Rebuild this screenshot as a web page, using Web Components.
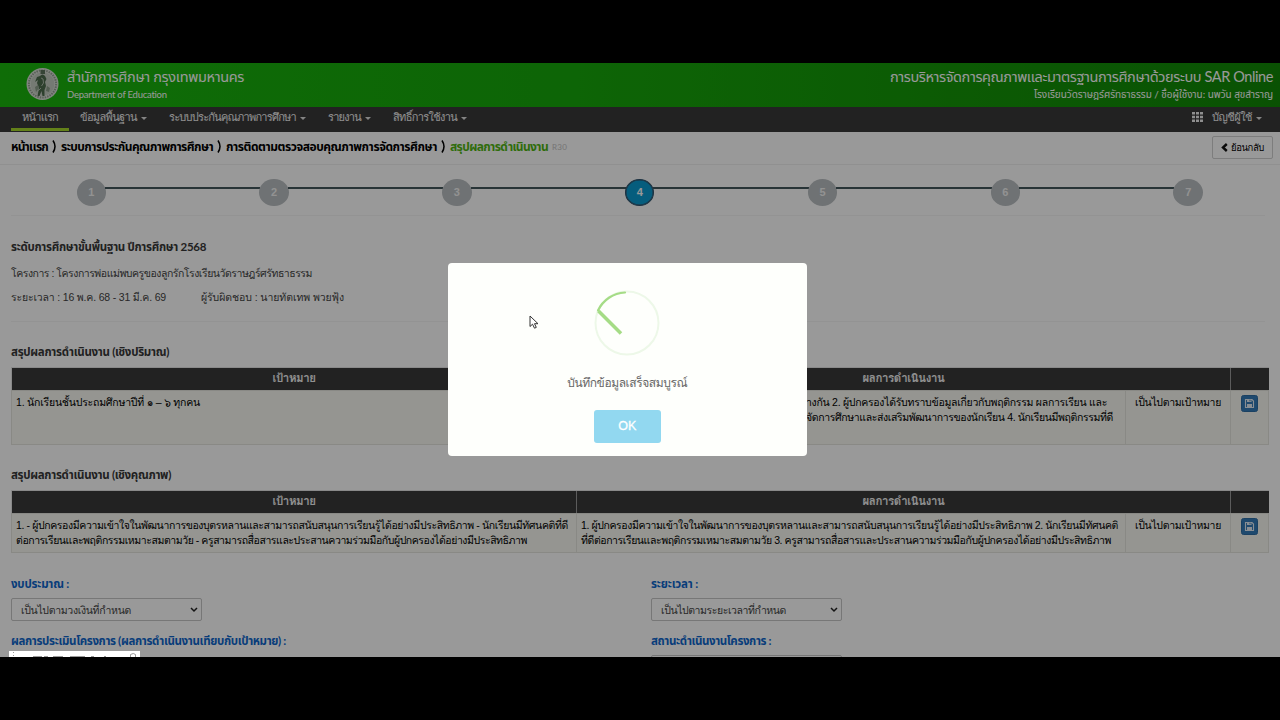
<!DOCTYPE html>
<html lang="th">
<head>
<meta charset="utf-8">
<title>SAR Online</title>
<style>
    body {
        --display: Lato, "Noto Sans Thai", "Noto Sans", sans-serif;
        margin: 0;
        background: #000;
        overflow: hidden;
        font-family: "Liberation Sans", Loma, "Noto Sans Thai Looped", "Noto Sans Thai", "Noto Sans", sans-serif;
    }
</style>
</head>
<body>
<sar-app></sar-app>

<script>
    // one line of text, tracked in or out so that it takes the given width
    class FitText extends HTMLElement {
        constructor() {
            super();
            this.attachShadow({mode: 'open'});
            this.shadowRoot.innerHTML = /*html*/ `
                <style>
                    :host { display: inline-block; white-space: nowrap; vertical-align: top; }
                </style>
                <slot></slot>
            `;
        }

        connectedCallback() {
            const width = Number(this.getAttribute('width'));
            if (!width) return;
            const segmenter = new Intl.Segmenter('th', {granularity: 'grapheme'});
            const count = [...segmenter.segment(this.textContent)].length;
            this.style.letterSpacing = '0px';
            const natural = this.getBoundingClientRect().width;
            this.style.letterSpacing = ((width - natural) / count).toFixed(3) + 'px';
        }
    }

    class TopBanner extends HTMLElement {
        constructor() {
            super();
            this.attachShadow({mode: 'open'});
            this.shadowRoot.innerHTML = /*html*/ `
                <style>
                    :host {
                        display: flex;
                        justify-content: space-between;
                        height: 44px;
                        box-sizing: border-box;
                        padding: 4px 7px 0 26px;
                        color: #fff;
                        background: linear-gradient(90deg, #19b60d 0%, #17a80a 45%, #118806 100%);
                        font-family: var(--display);
                    }
                    .brand { display: flex; gap: 8px; }
                    svg { width: 33px; height: 34px; }
                    .name { font-size: 14.5px; line-height: 20px; }
                    .sub { font-size: 9.5px; line-height: 15px; }
                    .right { text-align: right; }
                    .right .sub { font-size: 10px; }
                </style>
                <div class="brand">
                    <svg viewBox="0 0 33 34">
                        <circle cx="16.500" cy="17" r="16" fill="#d9ded6"/>
                        <circle cx="16.500" cy="17" r="13.600" fill="none" stroke="#94a192" stroke-width="2" stroke-dasharray="1.500 1"/>
                        <circle cx="16.500" cy="17" r="11.800" fill="#c3ccc0"/>
                        <path d="M14 9q2.500-3 5 0l1.500 3-1.500 3 1 4-1.500 4v6h-2l-1-5-2 5h-2l1.500-8-2-5 1-3-3 2 2-5z" fill="#4c6b4c"/>
                        <path d="M9 20l3-2 1 3-3 4zM21 19l3 2-1 4-3-1z" fill="#8b9d89"/>
                        <path d="M14.500 3h4.500v4h-4.500z" fill="#5b735a"/>
                        <path d="M15 11l2 1 .5 4-2 3M12 24l3-3" fill="none" stroke="#aebcab"/>
                    </svg>
                    <div>
                        <div class="name"><fit-text width="177">สำนักการศึกษา กรุงเทพมหานคร</fit-text></div>
                        <div class="sub"><fit-text width="100">Department of Education</fit-text></div>
                    </div>
                </div>
                <div class="right">
                    <div class="name"><fit-text width="383">การบริหารจัดการคุณภาพและมาตรฐานการศึกษาด้วยระบบ SAR Online</fit-text></div>
                    <div class="sub"><fit-text width="239">โรงเรียนวัดราษฎร์ศรัทธาธรรม / ชื่อผู้ใช้งาน: นพวัน สุขสำราญ</fit-text></div>
                </div>
            `;
        }
    }

    class NavItem extends HTMLElement {
        constructor() {
            super();
            this.attachShadow({mode: 'open'});
            this.shadowRoot.innerHTML = /*html*/ `
                <style>
                    :host {
                        display: flex;
                        align-items: center;
                        box-sizing: border-box;
                        height: 24px;
                        padding: 0 11px 4px;
                        font-size: 11px;
                        line-height: 20px;
                        color: #f0f0f0;
                    }
                    :host([active]) { border-bottom: 3px solid #a6d82a; padding-bottom: 1px; }
                    i { display: none; border: 3px solid transparent; border-top-color: #ddd; border-bottom: 0; margin: 2px 0 0 4px; }
                    :host([caret]) i { display: block; }
                </style>
                <slot></slot><i></i>
            `;
        }
    }

    class MainNav extends HTMLElement {
        constructor() {
            super();
            this.attachShadow({mode: 'open'});
            this.shadowRoot.innerHTML = /*html*/ `
                <style>
                    :host {
                        display: flex;
                        height: 25px;
                        box-sizing: border-box;
                        padding: 0 7px 0 11px;
                        background: #3a3a3a;
                    }
                    .space { flex: 1; }
                    svg { width: 11px; height: 10px; margin: 5px -2px 0 0; }
                </style>
                <nav-item active><fit-text width="36">หน้าแรก</fit-text></nav-item>
                <nav-item caret><fit-text width="57">ข้อมูลพื้นฐาน</fit-text></nav-item>
                <nav-item caret><fit-text width="127">ระบบประกันคุณภาพการศึกษา</fit-text></nav-item>
                <nav-item caret><fit-text width="33">รายงาน</fit-text></nav-item>
                <nav-item caret><fit-text width="64">สิทธิ์การใช้งาน</fit-text></nav-item>
                <div class="space"></div>
                <svg viewBox="0 0 11 10" fill="#eee">
                    <path d="M0 0h3v2.600H0zM4 0h3v2.600H4zM8 0h3v2.600H8zM0 3.700h3v2.600H0zM4 3.700h3v2.600H4zM8 3.700h3v2.600H8zM0 7.400h3V10H0zM4 7.400h3V10H4zM8 7.400h3V10H8z"/>
                </svg>
                <nav-item caret><fit-text width="40">บัญชีผู้ใช้</fit-text></nav-item>
            `;
        }
    }

    class BreadCrumb extends HTMLElement {
        constructor() {
            super();
            this.attachShadow({mode: 'open'});
            this.shadowRoot.innerHTML = /*html*/ `
                <style>
                    :host {
                        display: flex;
                        align-items: flex-start;
                        justify-content: space-between;
                        height: 33px;
                        box-sizing: border-box;
                        padding: 4px 7px 0 11px;
                        border-bottom: 1px solid #f0f0f0;
                        font-size: 12px;
                        color: #000;
                    }
                    .trail { display: flex; line-height: 22px; font-weight: bold; font-family: var(--display); }
                    .trail svg { width: 5px; height: 13px; margin: 4px 4px 0 4px; }
                    .here { color: #4fb512; }
                    .code { font-size: 8px; color: #c4c4c4; margin-left: 4px; font-weight: normal; line-height: 23px; }
                    .back {
                        display: flex;
                        align-items: center;
                        justify-content: center;
                        gap: 3px;
                        width: 61px;
                        height: 23px;
                        box-sizing: border-box;
                        border: 1px solid #d0d0d0;
                        border-radius: 2px;
                        font-size: 9.5px;
                        line-height: 18px;
                    }
                    .back svg { width: 7px; height: 9px; margin-top: -1px; }
                </style>
                <div class="trail">
                    <fit-text width="37">หน้าแรก</fit-text>
                    <svg viewBox="0 0 5 13"><path d="M1 .5q4 6 0 12" fill="none" stroke="#000" stroke-width="1.500"/></svg>
                    <fit-text width="152">ระบบการประกันคุณภาพการศึกษา</fit-text>
                    <svg viewBox="0 0 5 13"><path d="M1 .5q4 6 0 12" fill="none" stroke="#000" stroke-width="1.500"/></svg>
                    <fit-text width="211">การติดตามตรวจสอบคุณภาพการจัดการศึกษา</fit-text>
                    <svg viewBox="0 0 5 13"><path d="M1 .5q4 6 0 12" fill="none" stroke="#000" stroke-width="1.500"/></svg>
                    <fit-text class="here" width="98">สรุปผลการดำเนินงาน</fit-text>
                    <fit-text class="code" width="15">R30</fit-text>
                </div>
                <div class="back">
                    <svg viewBox="0 0 7 9"><path d="M5.800 1L2 4.500 5.800 8" fill="none" stroke="#111" stroke-width="2.400"/></svg>
                    <fit-text width="33">ย้อนกลับ</fit-text>
                </div>
            `;
        }
    }

    class StepBar extends HTMLElement {
        constructor() {
            super();
            this.attachShadow({mode: 'open'});
            const current = Number(this.getAttribute('current'));
            let steps = '';
            for (let i = 1; i <= 7; i++) {
                steps += (i > 1 ? '<hr>' : '') + `<span class="${i === current ? 'on' : ''}">${i}</span>`;
            }
            this.shadowRoot.innerHTML = /*html*/ `
                <style>
                    :host {
                        display: flex;
                        height: 51px;
                        box-sizing: border-box;
                        margin: 0 15px 0 11px;
                        padding: 14px 62px 0 65.5px;
                        border-bottom: 1px solid #f5f5f5;
                    }
                    span {
                        width: 29.5px;
                        height: 27px;
                        box-sizing: border-box;
                        border-radius: 50%;
                        background: #b9bec1;
                        color: #f4f4f4;
                        font: bold 11px/27px "Liberation Sans", sans-serif;
                        text-align: center;
                    }
                    .on { background: #0b9bd0; border: 1px solid #34526a; box-shadow: inset 0 0 0 .5px #34526a; line-height: 25px; color: #fff; }
                    hr { flex: 1; height: 2px; margin: 8px -1px 0; border: 0; background: #44575d; }
                </style>
                ${steps}
            `;
        }
    }

    class ResultTable extends HTMLElement {
        constructor() {
            super();
            this.attachShadow({mode: 'open'});
            this.shadowRoot.innerHTML = /*html*/ `
                <style>
                    :host { display: block; margin: 0 11px; color: #000; font-size: 10.500px; }
                    .row { display: grid; grid-template-columns: 564px 549px 105px 1fr; }
                    .head {
                        height: 23px;
                        background: #3a3a3a;
                        color: #f2f2f2;
                        font-size: 11.500px;
                        line-height: 20px;
                        font-weight: bold;
                        text-align: center;
                        border: 1px solid #e4e4e4;
                        border-width: 1px 0 0 1px;
                        box-sizing: border-box;
                    }
                    .head .wide { grid-column: span 2; }
                    .head div + div { border-left: 1.500px solid #999; }
                    .body {
                        height: var(--row-height, 54px);
                        box-sizing: border-box;
                        background: #f8f8f2;
                        border: 1px solid #e4e4de;
                        line-height: 14.500px;
                    }
                    .body > div { padding: 4px 0 0 4px; }
                    .body > div + div { border-left: 1px solid #e4e4de; }
                    .body .state { padding: 4px 0 0; text-align: center; }
                    .body .act { display: flex; justify-content: center; padding: 4px 0 0; }
                    .act svg { width: 17px; height: 17px; }
                </style>
                <div class="row head">
                    <div><fit-text width="43">เป้าหมาย</fit-text></div>
                    <div class="wide"><fit-text width="82">ผลการดำเนินงาน</fit-text></div>
                    <div></div>
                </div>
                <div class="row body">
                    <div><slot name="goal"></slot></div>
                    <div><slot name="result"></slot></div>
                    <div class="state"><fit-text width="86">เป็นไปตามเป้าหมาย</fit-text></div>
                    <div class="act">
                        <svg viewBox="0 0 17 17">
                            <rect x=".5" y=".5" width="16" height="16" rx="2" fill="#337ab7" stroke="#2e6da4"/>
                            <path d="M4.500 4.500h6.500l1.500 1.500v6.500h-8z" fill="none" stroke="#e4edf5" stroke-width="1.100"/>
                            <path d="M6 4h4.500v3H6zM6 9h5v3.500H6z" fill="#e4edf5"/>
                            <path d="M8.500 4.800h1v1.500h-1z" fill="#337ab7"/>
                        </svg>
                    </div>
                </div>
            `;
        }
    }

    class SelectBox extends HTMLElement {
        constructor() {
            super();
            this.attachShadow({mode: 'open'});
            this.shadowRoot.innerHTML = /*html*/ `
                <style>
                    :host {
                        display: flex;
                        justify-content: space-between;
                        align-items: center;
                        width: 191px;
                        height: 23px;
                        box-sizing: border-box;
                        padding: 0 3px 0 9px;
                        border: 1px solid #c6c6c6;
                        border-radius: 2px;
                        font-size: 10.500px;
                        line-height: 20px;
                        color: #444;
                    }
                    svg { width: 8px; height: 6px; }
                </style>
                <slot></slot>
                <svg viewBox="0 0 8 6"><path d="M1 1l3 3 3-3" fill="none" stroke="#222" stroke-width="1.500"/></svg>
            `;
        }
    }

    class AlertBox extends HTMLElement {
        constructor() {
            super();
            this.attachShadow({mode: 'open'});
            this.shadowRoot.innerHTML = /*html*/ `
                <style>
                    :host {
                        position: absolute;
                        left: 448px;
                        top: 200px;
                        width: 358.500px;
                        height: 193px;
                        display: flex;
                        flex-direction: column;
                        align-items: center;
                        background: #fefffc;
                        border-radius: 4px;
                    }
                    svg { flex: none; width: 66px; height: 66px; margin: 27px 0 0 -1px; }
                    .text { margin-top: 17px; font-size: 12px; line-height: 20px; color: #666; }
                    button {
                        width: 67px;
                        height: 33px;
                        margin: 17px 0 0 0;
                        padding: 0;
                        border: 0;
                        border-radius: 3px;
                        background: #92d8f0;
                        color: #fff;
                        font: 12.500px/33px "Liberation Sans", sans-serif;
                        -webkit-text-stroke: .3px #fff;
                    }
                </style>
                <svg viewBox="0 0 66 66" fill="none" stroke-linecap="round">
                    <circle cx="33" cy="33" r="31.500" stroke="#edf8e8" stroke-width="2"/>
                    <path d="M4 20.500A31.500 31.500 0 0 1 31 2.500" stroke="#a5dc86" stroke-width="2.200"/>
                    <path d="M4.500 21L27 43.500" stroke="#a5dc86" stroke-width="3.600" stroke-linecap="butt"/>
                </svg>
                <div class="text"><slot></slot></div>
                <button>OK</button>
            `;
        }
    }

    class SarApp extends HTMLElement {
        constructor() {
            super();
            this.attachShadow({mode: 'open'});
            this.shadowRoot.innerHTML = /*html*/ `
                <style>
                    :host {
                        display: block;
                        position: relative;
                        height: 594px;
                        margin: 63px 0;
                        overflow: hidden;
                        background: #fff;
                        color: #444;
                    }
                    h4 { margin: 0 11px; font-family: var(--display); font-size: 11.500px; line-height: 18px; height: 18px; color: #383838; }
                    p { display: flex; gap: 35px; font-size: 10.500px; line-height: 18px; }
                    .project { padding-top: 22px; height: 106px; box-sizing: border-box; margin: 0 15px 0 11px; border-bottom: 1px solid #f5f5f5; }
                    .project h4 { margin: 0; }
                    .project p { margin: 8px 0 0; }
                    .project p + p { margin-top: 6px; }
                    .first { margin-top: 21px; }
                    .second { margin-top: 21px; }
                    h4 + result-table { margin-top: 6px; }
                    .form {
                        display: grid;
                        grid-template-columns: 640px 1fr;
                        row-gap: 11px;
                        padding: 22px 0 0 11px;
                    }
                    .form label { display: block; height: 18px; margin-bottom: 5px; font-family: var(--display); font-size: 11.500px; line-height: 17px; font-weight: bold; color: #0e66cc; }
                    .shade { position: absolute; inset: 0; background: rgba(0, 0, 0, .4); }
                    .status { position: absolute; left: 9px; bottom: 0; width: 131px; height: 6px; background: #fff; }
                    .status svg, .cursor { display: block; }
                    .cursor { position: absolute; left: 529px; top: 252px; width: 10px; height: 15px; }
                </style>
                <top-banner></top-banner>
                <main-nav></main-nav>
                <bread-crumb></bread-crumb>
                <step-bar current="4"></step-bar>

                <div class="project">
                    <h4><fit-text width="195">ระดับการศึกษาขั้นพื้นฐาน ปีการศึกษา 2568</fit-text></h4>
                    <p><fit-text width="301">โครงการ : โครงการพ่อแม่พบครูของลูกรักโรงเรียนวัดราษฎร์ศรัทธาธรรม</fit-text></p>
                    <p>
                        <fit-text width="155">ระยะเวลา : 16 พ.ค. 68 - 31 มี.ค. 69</fit-text>
                        <fit-text width="143">ผู้รับผิดชอบ : นายทัตเทพ พวยฟุ้ง</fit-text>
                    </p>
                </div>

                <h4 class="first"><fit-text width="158">สรุปผลการดำเนินงาน (เชิงปริมาณ)</fit-text></h4>
                <result-table style="--row-height: 55px">
                    <fit-text slot="goal" width="184">1. นักเรียนชั้นประถมศึกษาปีที่ ๑ – ๖ ทุกคน</fit-text>
                    <div slot="result" style="padding-left: 225px">
                        <fit-text width="301">างกัน 2. ผู้ปกครองได้รับทราบข้อมูลเกี่ยวกับพฤติกรรม ผลการเรียน และ</fit-text>
                        <fit-text width="307">จัดการศึกษาและส่งเสริมพัฒนาการของนักเรียน 4. นักเรียนมีพฤติกรรมที่ดี</fit-text>
                    </div>
                </result-table>

                <h4 class="second"><fit-text width="160">สรุปผลการดำเนินงาน (เชิงคุณภาพ)</fit-text></h4>
                <result-table style="--row-height: 40px">
                    <div slot="goal">
                        <fit-text width="552">1. - ผู้ปกครองมีความเข้าใจในพัฒนาการของบุตรหลานและสามารถสนับสนุนการเรียนรู้ได้อย่างมีประสิทธิภาพ - นักเรียนมีทัศนคติที่ดี</fit-text>
                        <fit-text width="511">ต่อการเรียนและพฤติกรรมเหมาะสมตามวัย - ครูสามารถสื่อสารและประสานความร่วมมือกับผู้ปกครองได้อย่างมีประสิทธิภาพ</fit-text>
                    </div>
                    <div slot="result">
                        <fit-text width="537">1. ผู้ปกครองมีความเข้าใจในพัฒนาการของบุตรหลานและสามารถสนับสนุนการเรียนรู้ได้อย่างมีประสิทธิภาพ 2. นักเรียนมีทัศนคติ</fit-text>
                        <fit-text width="530">ที่ดีต่อการเรียนและพฤติกรรมเหมาะสมตามวัย 3. ครูสามารถสื่อสารและประสานความร่วมมือกับผู้ปกครองได้อย่างมีประสิทธิภาพ</fit-text>
                    </div>
                </result-table>

                <div class="form">
                    <div>
                        <label><fit-text width="58">งบประมาณ :</fit-text></label>
                        <select-box><fit-text width="110">เป็นไปตามวงเงินที่กำหนด</fit-text></select-box>
                    </div>
                    <div>
                        <label><fit-text width="47">ระยะเวลา :</fit-text></label>
                        <select-box><fit-text width="125">เป็นไปตามระยะเวลาที่กำหนด</fit-text></select-box>
                    </div>
                    <div>
                        <label><fit-text width="275">ผลการประเมินโครงการ (ผลการดำเนินงานเทียบกับเป้าหมาย) :</fit-text></label>
                    </div>
                    <div>
                        <label><fit-text width="120">สถานะดำเนินงานโครงการ :</fit-text></label>
                        <select-box></select-box>
                    </div>
                </div>

                <div class="shade"></div>
                <div class="status">
                    <svg width="131" height="6" fill="none" stroke="#999">
                        <path d="M4.500 1v1M4.500 4v1M24 5.500h9M35 5.500h4M44 5.500h10M61 5.500h15M82 5.500h3M95 5.500h2M121.500 6V3.500q3-2 5 0V6"/>
                    </svg>
                </div>
                <alert-box><fit-text width="120">บันทึกข้อมูลเสร็จสมบูรณ์</fit-text></alert-box>
                <svg class="cursor" viewBox="0 0 10 15"><path d="M1 1v10.500l2.500-2.300 2 4 1.800-.8-1.800-3.700H9z" fill="#fff" stroke="#333"/></svg>
            `;
        }
    }

    window.customElements.define('fit-text', FitText);
    window.customElements.define('nav-item', NavItem);
    window.customElements.define('top-banner', TopBanner);
    window.customElements.define('main-nav', MainNav);
    window.customElements.define('bread-crumb', BreadCrumb);
    window.customElements.define('step-bar', StepBar);
    window.customElements.define('result-table', ResultTable);
    window.customElements.define('select-box', SelectBox);
    window.customElements.define('alert-box', AlertBox);
    window.customElements.define('sar-app', SarApp);
</script>
</body>
</html>
